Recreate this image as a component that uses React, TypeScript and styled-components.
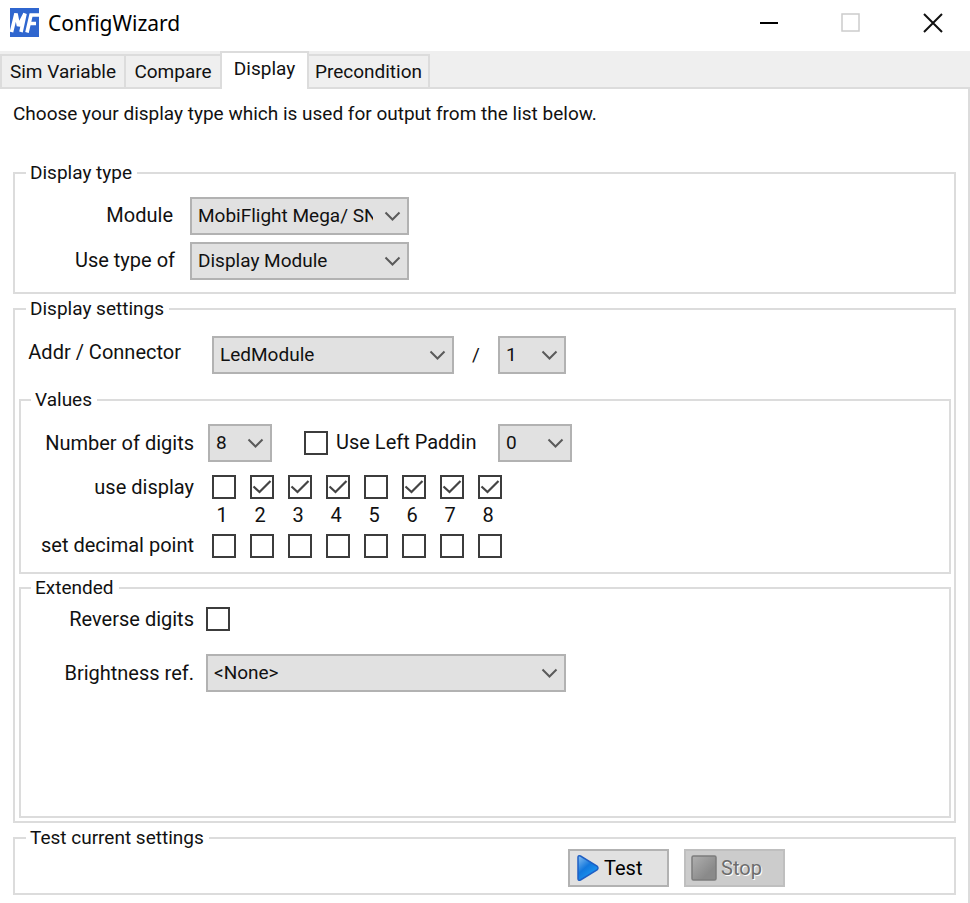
import React, { useState } from "react";
import styled, { createGlobalStyle } from "styled-components";

const LINE = "#dcdcdc";
const INK = "#111";

const GlobalStyle = createGlobalStyle`
  *, *::before, *::after { box-sizing: border-box; }
  body {
    margin: 0;
    background: #fff;
    color: ${INK};
    font: 19px/22px Roboto, "Liberation Sans", sans-serif;
  }
  button, select, input { font: inherit; color: inherit; margin: 0; }
`;

const Window = styled.div`
  display: flex;
  flex-direction: column;
  min-height: 100vh;
`;

const TitleBar = styled.header`
  display: flex;
  align-items: center;
  height: 51px;
  padding: 0 0 6px 10px;
  gap: 9px;
`;

const Title = styled.h1`
  flex: 1;
  margin: 0;
  font: 400 21px/30px "Noto Sans", "Open Sans", sans-serif;
  color: #000;
`;

const CaptionButton = styled.button`
  display: grid;
  place-items: center;
  width: 82px;
  height: 44px;
  padding: 0;
  border: 0;
  background: transparent;
`;

const CaptionButtons = styled.div`
  display: flex;
  margin-right: -4px;
`;

const TabStrip = styled.div`
  display: flex;
  align-items: flex-end;
  height: 38px;
  background: #efefef;
  box-shadow: inset 0 -2px ${LINE};
`;

const Tab = styled.button<{ $active?: boolean; $width: number }>`
  width: ${(p) => p.$width}px;
  height: ${(p) => (p.$active ? 38 : 35)}px;
  padding: 0 0 ${(p) => (p.$active ? 4 : 0)}px;
  border: 2px solid ${LINE};
  border-width: ${(p) => (p.$active ? "2px 2px 0" : "2px 0 2px 2px")};
  background: ${(p) => (p.$active ? "#fff" : "#efefef")};
  white-space: nowrap;
  &:last-child { border-right-width: 2px; border-left-width: 0; }
`;

const Page = styled.main`
  flex: 1;
  padding: 14px 12px 8px 13px;
  border-right: 2px solid ${LINE};
`;

const Intro = styled.p`
  margin: 0 0 37px;
`;

const Group = styled.fieldset<{ $pad: string }>`
  min-width: 0;
  margin: 0;
  padding: ${(p) => p.$pad};
  border: 2px solid ${LINE};
  & + & { margin-top: 4px; }
`;

const InnerGroup = styled(Group)<{ $minHeight?: number }>`
  margin-top: 15px;
  min-height: ${(p) => p.$minHeight ?? 0}px;
  & + & { margin-top: 3px; }
`;

const Legend = styled.legend<{ $inset: number }>`
  height: 22px;
  margin-left: ${(p) => p.$inset}px;
  padding: 0 5px 0 4px;
`;

const Row = styled.div<{ $top?: number; $align?: string }>`
  display: flex;
  align-items: ${(p) => p.$align ?? "center"};
  margin-top: ${(p) => p.$top ?? 0}px;
`;

const RowLabel = styled.label<{ $width: number; $gap: number; $lift?: number }>`
  width: ${(p) => p.$width}px;
  margin-right: ${(p) => p.$gap}px;
  padding-bottom: ${(p) => p.$lift ?? 0}px;
  font-size: 20px;
  text-align: right;
  white-space: nowrap;
`;

const SelectBox = styled.div<{ $width: number }>`
  position: relative;
  flex: none;
  width: ${(p) => p.$width}px;
  svg {
    position: absolute;
    right: 8px;
    top: 14px;
    pointer-events: none;
  }
`;

const NativeSelect = styled.select`
  appearance: none;
  display: block;
  width: 100%;
  height: 38px;
  padding: 0 34px 0 6px;
  border: 2px solid #b2b2b2;
  border-radius: 0;
  background: #e1e1e1;
`;

const CheckWrap = styled.span`
  position: relative;
  display: block;
  flex: none;
  width: 24px;
  height: 24px;
  svg {
    position: absolute;
    inset: 0;
    pointer-events: none;
  }
`;

const CheckInput = styled.input`
  appearance: none;
  display: block;
  width: 24px;
  height: 24px;
  border: 2px solid #3c3c3c;
  background: #fff;
`;

const PaddingOption = styled.div`
  display: flex;
  align-items: center;
  margin-left: 32px;
`;

const PaddingLabel = styled.label`
  width: 142px;
  margin: 0 20px 0 8px;
  padding-bottom: 2px;
  font-size: 20px;
  white-space: nowrap;
`;

const DigitGrid = styled.div`
  display: grid;
  grid-template-columns: repeat(8, 24px);
  column-gap: 14px;
`;

const DigitNumber = styled.span`
  padding-right: 4px;
  font-size: 20px;
  text-align: center;
`;

const Slash = styled.span`
  width: 44px;
  text-align: center;
`;

const Actions = styled.div`
  display: flex;
  justify-content: flex-end;
  gap: 15px;
  padding-right: 169px;
`;

const ActionButton = styled.button`
  display: flex;
  align-items: center;
  gap: 4px;
  width: 101px;
  height: 38px;
  padding: 0 6px;
  border: 2px solid #b2b2b2;
  background: #e1e1e1;
  color: #000;
  font-size: 20px;
  &:disabled {
    padding: 0 5px;
    border-color: #bfbfbf;
    background: #ccc;
    color: #6d6d6d;
    text-shadow: 1px 1px #fff;
  }
`;

type SelectProps = { id: string; width: number; options: string[]; label?: string };

function Select({ id, width, options, label }: SelectProps) {
  return (
    <SelectBox $width={width}>
      <NativeSelect id={id} aria-label={label}>
        {options.map((o) => (
          <option key={o}>{o}</option>
        ))}
      </NativeSelect>
      <svg width="17" height="12" viewBox="0 0 17 12" fill="none" stroke="#5a5a5a" strokeWidth="2">
        <path d="M1.5 1.5 8.5 8.5 15.5 1.5" />
      </svg>
    </SelectBox>
  );
}

type CheckProps = { id?: string; label?: string; initial?: boolean };

function Check({ id, label, initial = false }: CheckProps) {
  const [on, setOn] = useState(initial);
  return (
    <CheckWrap>
      <CheckInput
        type="checkbox"
        id={id}
        aria-label={label}
        checked={on}
        onChange={(e) => setOn(e.target.checked)}
      />
      {on && (
        <svg width="24" height="24" viewBox="0 0 24 24" fill="none" stroke="#444" strokeWidth="2.2">
          <path d="M3.5 11.5 9.5 17 20.5 6" />
        </svg>
      )}
    </CheckWrap>
  );
}

function Logo() {
  return (
    <svg width="29" height="29" viewBox="0 0 29 29" aria-hidden="true">
      <rect width="29" height="29" fill="#2f66cf" />
      <g fill="none" stroke="#fff" strokeWidth="3.6">
        <path d="M1.5 24 6 5.5 8.5 18 15 5.5 11 24" strokeLinejoin="bevel" />
        <path d="M17 24.5 21 7H29M19.5 15.5H26" />
      </g>
    </svg>
  );
}

function PlayIcon() {
  return (
    <svg width="24" height="28" viewBox="0 0 24 28" aria-hidden="true">
      <defs>
        <linearGradient id="play" x1="0" y1="0" x2="0.7" y2="1">
          <stop offset="0" stopColor="#8cc2f2" />
          <stop offset="0.5" stopColor="#1277dd" />
          <stop offset="1" stopColor="#1fa0f5" />
        </linearGradient>
      </defs>
      <path
        d="M2 3.5Q2 1 4.5 2L21 12Q23 14 21 16L4.5 26Q2 27 2 24.5Z"
        fill="url(#play)"
        stroke="#1f5fc4"
        strokeWidth="1.5"
      />
    </svg>
  );
}

function StopIcon() {
  return (
    <svg width="26" height="26" viewBox="0 0 26 26" aria-hidden="true">
      <defs>
        <linearGradient id="stop" x1="0" y1="0" x2="0.7" y2="0.7">
          <stop offset="0" stopColor="#b0b0b0" />
          <stop offset="1" stopColor="#8a8a8a" />
        </linearGradient>
      </defs>
      <rect x="1" y="1" width="24" height="24" rx="1.5" fill="url(#stop)" stroke="#7c7c7c" strokeWidth="1.5" />
    </svg>
  );
}

const digits = [1, 2, 3, 4, 5, 6, 7, 8];
const unused = [1, 5];

export default function App() {
  return (
    <>
      <GlobalStyle />
      <Window>
        <TitleBar>
          <Logo />
          <Title>ConfigWizard</Title>
          <CaptionButtons>
            <CaptionButton aria-label="Minimize">
              <svg width="20" height="20" stroke="#000" strokeWidth="2">
                <path d="M1 10H19" />
              </svg>
            </CaptionButton>
            <CaptionButton aria-label="Maximize" disabled>
              <svg width="20" height="20" fill="none" stroke="#ccc" strokeWidth="1.5">
                <rect x="1" y="1" width="17" height="17" />
              </svg>
            </CaptionButton>
            <CaptionButton aria-label="Close">
              <svg width="20" height="20" stroke="#111" strokeWidth="2">
                <path d="M1 1 19 19M19 1 1 19" />
              </svg>
            </CaptionButton>
          </CaptionButtons>
        </TitleBar>

        <TabStrip role="tablist">
          <Tab role="tab" $width={124}>Sim Variable</Tab>
          <Tab role="tab" $width={96}>Compare</Tab>
          <Tab role="tab" $width={89} $active aria-selected>Display</Tab>
          <Tab role="tab" $width={121}>Precondition</Tab>
        </TabStrip>

        <Page>
          <Intro>Choose your display type which is used for output from the list below.</Intro>

          <Group $pad="13px 0 12px">
            <Legend $inset={11}>Display type</Legend>
            <Row>
              <RowLabel htmlFor="module" $width={158} $gap={17} $lift={2}>Module</RowLabel>
              <Select id="module" width={219} options={["MobiFlight Mega/ SN-b2f-1c4"]} />
            </Row>
            <Row $top={7}>
              <RowLabel htmlFor="type" $width={160} $gap={15} $lift={2}>Use type of</RowLabel>
              <Select id="type" width={219} options={["Display Module", "Pin", "LCD"]} />
            </Row>
          </Group>

          <Group $pad="16px 3px 3px 4px">
            <Legend $inset={7}>Display settings</Legend>
            <Row>
              <RowLabel htmlFor="addr" $width={162} $gap={31} $lift={6}>Addr / Connector</RowLabel>
              <Select id="addr" width={242} options={["LedModule"]} />
              <Slash>/</Slash>
              <Select id="connector" label="Connector" width={68} options={["1", "2", "3", "4"]} />
            </Row>

            <InnerGroup $pad="13px 0 14px">
              <Legend $inset={10}>Values</Legend>
              <Row>
                <RowLabel htmlFor="digits" $width={173} $gap={14}>Number of digits</RowLabel>
                <Select id="digits" width={64} options={["8", "7", "6", "5", "4", "3", "2", "1"]} />
                <PaddingOption>
                  <Check id="leftpad" />
                  <PaddingLabel htmlFor="leftpad">Use Left Paddin</PaddingLabel>
                </PaddingOption>
                <Select id="padchar" label="Padding character" width={74} options={["0", " "]} />
              </Row>
              <Row $top={13}>
                <RowLabel as="span" $width={173} $gap={18}>use display</RowLabel>
                <DigitGrid>
                  {digits.map((n) => (
                    <Check key={n} label={`Use display ${n}`} initial={!unused.includes(n)} />
                  ))}
                </DigitGrid>
              </Row>
              <Row $top={5}>
                <RowLabel as="span" $width={173} $gap={18} />
                <DigitGrid>
                  {digits.map((n) => (
                    <DigitNumber key={n}>{n}</DigitNumber>
                  ))}
                </DigitGrid>
              </Row>
              <Row $top={8} $align="flex-start">
                <RowLabel as="span" $width={173} $gap={18}>set decimal point</RowLabel>
                <DigitGrid>
                  {digits.map((n) => (
                    <Check key={n} label={`Set decimal point ${n}`} />
                  ))}
                </DigitGrid>
              </Row>
            </InnerGroup>

            <InnerGroup $pad="8px 0" $minHeight={241}>
              <Legend $inset={10}>Extended</Legend>
              <Row>
                <RowLabel htmlFor="reverse" $width={173} $gap={12}>Reverse digits</RowLabel>
                <Check id="reverse" />
              </Row>
              <Row $top={23}>
                <RowLabel htmlFor="brightness" $width={173} $gap={12}>Brightness ref.</RowLabel>
                <Select id="brightness" width={360} options={["<None>"]} />
              </Row>
            </InnerGroup>
          </Group>

          <Group $pad="0 0 6px">
            <Legend $inset={11}>Test current settings</Legend>
            <Actions>
              <ActionButton>
                <PlayIcon />
                Test
              </ActionButton>
              <ActionButton disabled>
                <StopIcon />
                Stop
              </ActionButton>
            </Actions>
          </Group>
        </Page>
      </Window>
    </>
  );
}
